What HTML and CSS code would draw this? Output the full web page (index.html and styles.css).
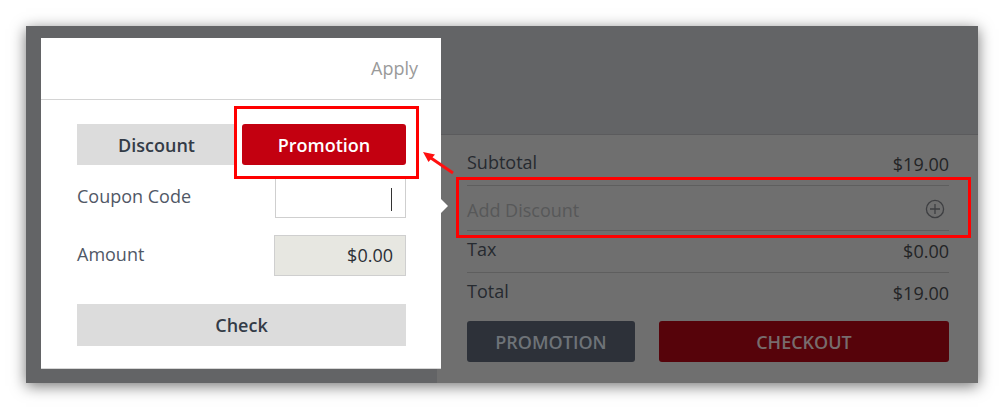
FILE: index.html
```html
<!DOCTYPE html>
<html lang="en">
<head>
<meta charset="utf-8">
<title>Add Discount</title>
<link rel="stylesheet" href="styles.css">
</head>
<body>
<div class="stage">
  <div class="frame">
    <div class="sidebar"></div>
    <div class="main">
      <div class="main-head"></div>
      <div class="summary">
        <div class="row row-sub"><span class="label">Subtotal</span><span class="value">$19.00</span></div>
        <div class="row row-add"><span class="label muted">Add Discount</span>
          <svg class="plus" width="20" height="20" viewBox="0 0 20 20"><circle cx="10" cy="10" r="8.6" fill="none" stroke="#3e3f42" stroke-width="1.3"/><path d="M10 5v10M5 10h10" stroke="#3e3f42" stroke-width="1.3"/></svg>
        </div>
        <div class="row row-tax"><span class="label">Tax</span><span class="value">$0.00</span></div>
        <div class="row row-total"><span class="label">Total</span><span class="value">$19.00</span></div>
        <div class="actions">
          <button class="btn btn-promo">PROMOTION</button>
          <button class="btn btn-checkout">CHECKOUT</button>
        </div>
      </div>
    </div>

    <div class="popup">
      <div class="popup-head"><span class="apply">Apply</span></div>
      <div class="popup-body">
        <div class="tabs">
          <div class="tab tab-discount">Discount</div>
          <div class="tab tab-promo">Promotion</div>
        </div>
        <div class="field">
          <span class="field-label">Coupon Code</span>
          <div class="input"><span class="caret"></span></div>
        </div>
        <div class="field field-amount">
          <span class="field-label">Amount</span>
          <div class="input input-ro">$0.00</div>
        </div>
        <div class="check">Check</div>
      </div>
      <span class="pointer"></span>
    </div>
  </div>

  <div class="hl hl-tab"></div>
  <div class="hl hl-row"></div>
  <svg class="arrow" width="40" height="32" viewBox="0 0 40 32">
    <path d="M33 25 L8 8" stroke="#ff1010" stroke-width="3" fill="none"/>
    <path d="M3 4 L15 6.5 L8.5 14 Z" fill="#ff1010"/>
  </svg>
</div>
</body>
</html>
```

FILE: styles.css
```css
* { box-sizing: border-box; }
html, body { margin: 0; padding: 0; background: #ffffff; }
body { font-family: "Open Sans", "Liberation Sans", sans-serif; }

.stage { position: relative; width: 1004px; height: 410px; padding: 26px; }

.frame {
  position: relative;
  width: 952px;
  height: 357px;
  display: flex;
  box-shadow: 0 3px 14px rgba(0, 0, 0, 0.55);
}
.sidebar { width: 411px; background: #636466; }
.main { flex: 1; display: flex; flex-direction: column; }
.main-head { height: 109px; flex: none; background: #636466; border-bottom: 1px solid #5b5b5d; }
.summary {
  flex: 1;
  background: #6f6f6f;
  padding: 0 29px 0 30px;
  display: flex;
  flex-direction: column;
}

.row {
  display: flex;
  justify-content: space-between;
  align-items: flex-start;
  font-size: 18px;
  line-height: 24px;
  color: #262a30;
}
.row .value { margin-top: 2px; margin-bottom: -2px; color: #232426; }
.row-sub { padding: 15px 0 11px; border-bottom: 1px solid #5e5e5e; }
.row-add { padding: 12px 4px 8px 0; border-bottom: 1px solid #5e5e5e; align-items: center; }
.row-tax { padding: 6px 0 11px; border-bottom: 1px solid #5e5e5e; }
.row-total { padding: 6px 0 0; }
.label.muted { color: #575859; }
.plus { display: block; margin-top: -2px; }

.actions { display: flex; gap: 24px; margin-top: 18px; }
.btn {
  height: 41px;
  border: 0;
  border-radius: 3px;
  font-family: inherit;
  font-size: 18px;
  font-weight: 600;
  padding: 0;
}
.btn-promo { width: 168px; background: #2d3139; color: #6e7378; }
.btn-checkout { flex: 1; background: #56030a; color: #776c6d; }

.popup {
  position: absolute;
  left: 15px;
  top: 12px;
  width: 400px;
  height: 331px;
  background: #ffffff;
  border-bottom: 1px solid #d6d6d6;
}
.popup-head {
  height: 62px;
  padding: 18px 23px 0 0;
  text-align: right;
  border-bottom: 1px solid #d4d4d4;
}
.apply { font-size: 18px; line-height: 24px; color: #9a9a9a; }
.popup-body { padding: 24px 35px 0 36px; }

.tabs { display: flex; gap: 6px; height: 41px; }
.tab {
  display: flex;
  align-items: center;
  justify-content: center;
  font-size: 18px;
  font-weight: 600;
}
.tab-discount { flex: 1; background: #dcdcdc; color: #333b47; }
.tab-promo { width: 164px; background: #c30010; color: #ffffff; border-radius: 3px; }

.field {
  display: flex;
  justify-content: space-between;
  align-items: center;
  margin-top: 12px;
}
.field-amount { margin-top: 17px; }
.field-label { font-size: 18px; color: #505866; padding-bottom: 4px; }
.input {
  position: relative;
  width: 131px;
  height: 41px;
  border: 1px solid #cfcfcf;
  background: #ffffff;
  text-align: right;
  font-size: 18px;
  line-height: 38px;
  padding-right: 12px;
  color: #2b2f36;
}
.input-ro { width: 132px; background: #e7e7e1; }
.caret {
  position: absolute;
  right: 13px;
  top: 10px;
  width: 1px;
  height: 23px;
  background: #333333;
}

.check {
  margin-top: 28px;
  height: 42px;
  background: #dcdcdc;
  display: flex;
  align-items: center;
  justify-content: center;
  font-size: 18px;
  font-weight: 600;
  color: #333b47;
}

.pointer {
  position: absolute;
  right: -7px;
  top: 161px;
  width: 0;
  height: 0;
  border-top: 7px solid transparent;
  border-bottom: 7px solid transparent;
  border-left: 7px solid #ffffff;
}

.hl { position: absolute; border: 3px solid #ff0000; }
.hl-tab { left: 234px; top: 106px; width: 185px; height: 73px; }
.hl-row { left: 456px; top: 177px; width: 515px; height: 61px; }
.arrow { position: absolute; left: 420px; top: 148px; }
```
